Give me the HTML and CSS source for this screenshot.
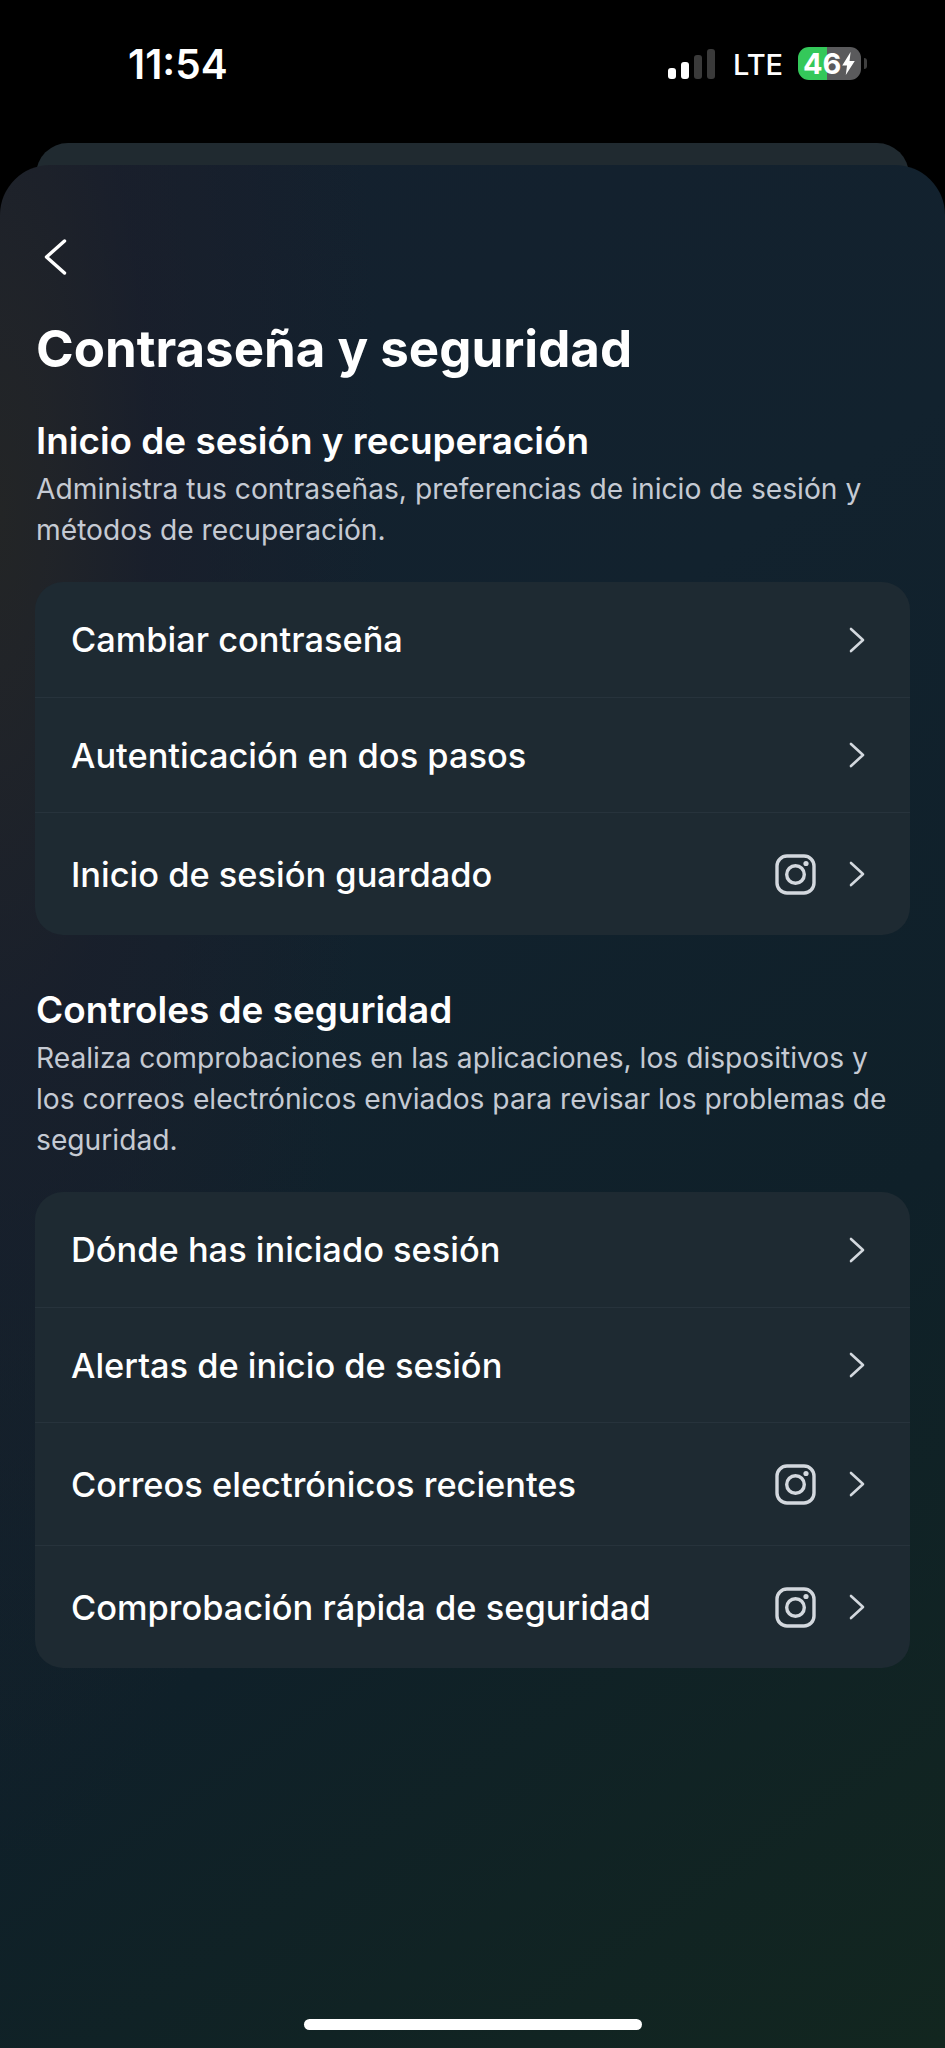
FILE: index.html
```html
<!DOCTYPE html>
<html lang="es">
<head>
  <meta charset="utf-8">
  <title>Contraseña y seguridad</title>
  <link rel="stylesheet" href="styles.css">
</head>
<body>
  <svg class="svgDefs" width="0" height="0">
    <symbol id="igIcon" viewBox="0 0 41 41">
      <rect x="2" y="2" width="37" height="37" rx="10" fill="none" stroke="currentColor" stroke-width="3.4"/>
      <circle cx="20.5" cy="20.5" r="8.8" fill="none" stroke="currentColor" stroke-width="3.4"/>
      <circle cx="31" cy="9.5" r="2.6" fill="currentColor"/>
    </symbol>
    <symbol id="chevron" viewBox="0 0 16 26">
      <path d="M2 2l12 11L2 24" fill="none" stroke="currentColor" stroke-width="2.6" stroke-linecap="round" stroke-linejoin="round"/>
    </symbol>
  </svg>

  <div class="statusBar">
    <span class="time">11:54</span>
    <div class="statusRight">
      <div class="signal">
        <i class="bar bar1"></i>
        <i class="bar bar2"></i>
        <i class="bar bar3 off"></i>
        <i class="bar bar4 off"></i>
      </div>
      <span class="network">LTE</span>
      <div class="battery">
        <span class="batteryLevel">46</span>
        <svg class="bolt" viewBox="0 0 12 22"><path d="M8 0L0 13h4.6L3.4 22 12 8.6H7z" fill="#fff"/></svg>
      </div>
      <i class="batteryNub"></i>
    </div>
  </div>

  <div class="sheetBehind"></div>

  <div class="sheet">
    <button class="backButton" aria-label="Volver">
      <svg viewBox="0 0 24 36" width="24" height="36"><path d="M20.5 2L2.5 18l18 16" fill="none" stroke="#fff" stroke-width="3.4" stroke-linecap="round" stroke-linejoin="round"/></svg>
    </button>

    <h1 class="pageTitle">Contraseña y seguridad</h1>

    <h2 class="sectionTitle">Inicio de sesión y recuperación</h2>
    <p class="sectionText">Administra tus contraseñas, preferencias de inicio de sesión y métodos de recuperación.</p>

    <div class="card">
      <div class="row row-short">
        <span class="rowLabel">Cambiar contraseña</span>
        <svg class="rowChevron"><use href="#chevron"/></svg>
      </div>
      <div class="row row-short">
        <span class="rowLabel">Autenticación en dos pasos</span>
        <svg class="rowChevron"><use href="#chevron"/></svg>
      </div>
      <div class="row row-tall">
        <span class="rowLabel">Inicio de sesión guardado</span>
        <svg class="rowIcon"><use href="#igIcon"/></svg>
        <svg class="rowChevron"><use href="#chevron"/></svg>
      </div>
    </div>

    <h2 class="sectionTitle second">Controles de seguridad</h2>
    <p class="sectionText">Realiza comprobaciones en las aplicaciones, los dispositivos y los correos electrónicos enviados para revisar los problemas de seguridad.</p>

    <div class="card">
      <div class="row row-short">
        <span class="rowLabel">Dónde has iniciado sesión</span>
        <svg class="rowChevron"><use href="#chevron"/></svg>
      </div>
      <div class="row row-short">
        <span class="rowLabel">Alertas de inicio de sesión</span>
        <svg class="rowChevron"><use href="#chevron"/></svg>
      </div>
      <div class="row row-tall">
        <span class="rowLabel">Correos electrónicos recientes</span>
        <svg class="rowIcon"><use href="#igIcon"/></svg>
        <svg class="rowChevron"><use href="#chevron"/></svg>
      </div>
      <div class="row row-tall">
        <span class="rowLabel">Comprobación rápida de seguridad</span>
        <svg class="rowIcon"><use href="#igIcon"/></svg>
        <svg class="rowChevron"><use href="#chevron"/></svg>
      </div>
    </div>

    <div class="homeBar"></div>
  </div>
</body>
</html>
```

FILE: styles.css
```css
* {
  margin: 0;
  padding: 0;
  box-sizing: border-box;
}

body {
  width: 945px;
  height: 2048px;
  overflow: hidden;
  background-color: #000;
  color: #fff;
  font-family: Inter, "Noto Sans", sans-serif;
}

.svgDefs {
  display: block;
  height: 0;
}

/* status bar */
.statusBar {
  display: flex;
  justify-content: space-between;
  align-items: flex-start;
  height: 143px;
  padding: 47px 78px 0 128px;
}

.time {
  font-size: 40.5px;
  line-height: 36px;
  font-weight: 600;
}

.statusRight {
  display: flex;
  align-items: center;
  height: 33px;
}

.signal {
  display: flex;
  align-items: flex-end;
  gap: 5px;
  height: 30px;
  margin: 1px 18px 0 0;
}

.bar {
  display: block;
  width: 8px;
  border-radius: 3px;
  background-color: #fff;
}

.bar1 { height: 11px; }
.bar2 { height: 17px; }
.bar3 { height: 24px; }
.bar4 { height: 30px; }

.bar.off {
  background-color: #3a3a3a;
}

.network {
  width: 65px;
  padding-top: 2px;
  font-size: 29px;
  font-weight: 500;
  line-height: 33px;
}

.battery {
  display: flex;
  align-items: center;
  width: 63px;
  height: 33px;
  padding-left: 5px;
  border-radius: 11px;
  background: linear-gradient(90deg, #34c85a 46%, #5a5a5c 46%);
}

.batteryLevel {
  font-size: 29px;
  font-weight: 700;
  line-height: 33px;
  letter-spacing: 0;
}

.bolt {
  width: 13px;
  height: 23px;
  margin-left: 1px;
}

.batteryNub {
  display: block;
  width: 3px;
  height: 11px;
  margin-left: 3px;
  border-radius: 0 3px 3px 0;
  background-color: #3f3f3f;
}

/* sheets */
.sheetBehind {
  height: 60px;
  margin: 0 36px;
  border-radius: 32px 32px 0 0;
  background-color: #202a30;
}

.sheet {
  display: flex;
  flex-direction: column;
  height: 1883px;
  margin-top: -38px;
  padding: 0 36px;
  border-radius: 50px 50px 0 0;
  background:
    radial-gradient(ellipse 380px 1350px at 0 350px, #232526 0, rgba(34, 36, 40, 0.9) 14%, rgba(28, 30, 42, 0.65) 40%, rgba(20, 30, 42, 0) 100%),
    linear-gradient(145deg, #14202e 0%, #12222e 35%, #0f2029 65%, #12261f 100%);
}

.backButton {
  display: block;
  align-self: flex-start;
  width: 24px;
  height: 36px;
  margin: 74px 0 0 8px;
  border: none;
  background: none;
}

.pageTitle {
  margin-top: 44px;
  font-size: 51px;
  line-height: 60px;
  font-weight: 700;
}

.sectionTitle {
  margin-top: 40px;
  font-size: 36.9px;
  line-height: 44px;
  font-weight: 600;
}

.sectionTitle.second {
  margin-top: 53px;
}

.sectionText {
  margin-top: 6px;
  font-size: 28.2px;
  line-height: 41px;
  color: #c5cad3;
}

.card {
  margin: 31px -1px 0;
  border-radius: 28px;
  background-color: #1e2a32;
}

.row {
  display: flex;
  align-items: center;
  padding: 0 45px 0 36px;
  border-top: 1px solid #27333c;
}

.row:first-child {
  border-top: none;
}

.row-short { height: 115px; }
.row-tall { height: 123px; }

.rowLabel {
  flex: 1;
  font-size: 34.4px;
  font-weight: 500;
}

.rowIcon {
  width: 41px;
  height: 41px;
  margin-right: 33px;
  color: #d3d8de;
}

.rowChevron {
  width: 16px;
  height: 26px;
  color: #d3d8de;
}

.homeBar {
  width: 338px;
  height: 11px;
  margin: auto auto 18px;
  border-radius: 6px;
  background-color: #fff;
}
```
